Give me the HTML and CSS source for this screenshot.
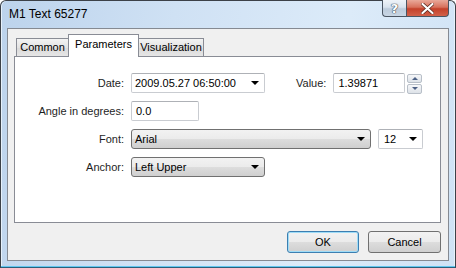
FILE: index.html
```html
<!DOCTYPE html>
<html lang="en">
<head>
    <meta charset="UTF-8">
    <title>M1 Text 65277</title>
    <link rel="stylesheet" href="styles.css">
</head>
<body>
    <div class="window">
        <div class="titlebar">
            <span class="title">M1 Text 65277</span>
            <div class="caption-buttons">
                <div class="cap-btn help">?</div>
                <div class="cap-btn close">
                    <svg width="13" height="11" viewBox="0 0 13 11">
                        <path d="M1.5 1 L11.5 10 M11.5 1 L1.5 10" stroke="#5a2a20" stroke-width="3.6" stroke-linecap="round"/>
                        <path d="M1.5 1 L11.5 10 M11.5 1 L1.5 10" stroke="#ffffff" stroke-width="2.2" stroke-linecap="round"/>
                    </svg>
                </div>
            </div>
        </div>

        <div class="client">
            <div class="tabs">
                <div class="tab tab-common">Common</div>
                <div class="tab tab-params active">Parameters</div>
                <div class="tab tab-vis">Visualization</div>
            </div>

            <div class="panel">
                <div class="row">
                    <label class="lbl">Date:</label>
                    <div class="combo edit w-date">
                        <span>2009.05.27 06:50:00</span>
                        <i class="arrow"></i>
                    </div>
                    <label class="lbl-value">Value:</label>
                    <div class="field w-value">1.39871</div>
                    <div class="spin">
                        <div class="spin-btn"><i class="up"></i></div>
                        <div class="spin-btn"><i class="down"></i></div>
                    </div>
                </div>
                <div class="row">
                    <label class="lbl">Angle in degrees:</label>
                    <div class="field w-angle">0.0</div>
                </div>
                <div class="row">
                    <label class="lbl">Font:</label>
                    <div class="combo list w-font">
                        <span>Arial</span>
                        <i class="arrow"></i>
                    </div>
                    <div class="combo edit w-size">
                        <span>12</span>
                        <i class="arrow"></i>
                    </div>
                </div>
                <div class="row">
                    <label class="lbl">Anchor:</label>
                    <div class="combo list w-anchor">
                        <span>Left Upper</span>
                        <i class="arrow"></i>
                    </div>
                </div>
            </div>

            <div class="actions">
                <button class="btn default">OK</button>
                <button class="btn">Cancel</button>
            </div>
        </div>
    </div>
</body>
</html>
```

FILE: styles.css
```css
body {
    margin: 0;
    padding: 0;
    background: #ffffff;
    font-family: 'Liberation Sans', Arial, sans-serif;
    font-size: 11px;
    color: #000;
}
.window {
    width: 456px;
    height: 268px;
    box-sizing: border-box;
    border: 1px solid #3c4148;
    border-bottom-color: #2a5f7c;
    border-radius: 6px 6px 0 0;
    background: linear-gradient(100deg, #bcd3ec 0%, #cfe1f4 35%, #dcebf9 70%, #cfe2f5 100%);
    box-shadow: inset 0 -1px 0 #62c6ef, inset 1px 0 0 #e6f1fb, inset -1px 0 0 #e6f1fb;
    display: flex;
    flex-direction: column;
}
.titlebar {
    height: 27px;
    flex: none;
    display: flex;
    justify-content: space-between;
    align-items: flex-start;
    padding: 0 6px 0 8px;
}
.title {
    font-size: 12px;
    line-height: 12px;
    margin-top: 7px;
    color: #000;
}
.caption-buttons {
    display: flex;
    margin-top: -1px;
}
.cap-btn {
    height: 17px;
    box-sizing: border-box;
    border: 1px solid #4a5562;
    border-top: none;
    display: flex;
    align-items: center;
    justify-content: center;
}
.help {
    width: 24px;
    border-radius: 0 0 0 4px;
    border-right: none;
    background: linear-gradient(#eef3f8 0%, #d9e3ee 45%, #bccbdb 55%, #c8d6e4 100%);
    font-family: 'DejaVu Sans', sans-serif;
    font-size: 13px;
    font-weight: bold;
    color: #ffffff;
    text-shadow: 0 0 1px #3b4653, 0 0 1px #3b4653, 0 0 1px #3b4653;
}
.close {
    width: 43px;
    border-radius: 0 0 4px 0;
    background: linear-gradient(#e9a99a 0%, #d8715c 45%, #c4412a 55%, #d2614a 100%);
}
.client {
    flex: 1;
    margin: 0 6px 6px 6px;
    border: 1px solid #858a92;
    background: #f0f0f0;
    display: flex;
    flex-direction: column;
}
.tabs {
    display: flex;
    align-items: flex-end;
    height: 22px;
    margin-top: 5px;
    padding-left: 8px;
    position: relative;
    z-index: 1;
}
.tab {
    box-sizing: border-box;
    height: 18px;
    border: 1px solid #898c95;
    border-bottom: none;
    background: linear-gradient(#f3f3f3, #e3e3e3 50%, #d9d9d9 51%, #e6e6e6);
    text-align: center;
    line-height: 17px;
    font-size: 11px;
    color: #000;
}
.tab-common {
    width: 52px;
    border-right: none;
}
.tab-params {
    width: 71px;
}
.tab-vis {
    width: 65px;
    border-left: none;
}
.tab.active {
    height: 23px;
    margin-bottom: -1px;
    background: #ffffff;
    line-height: 19px;
}
.panel {
    margin: 0 7px 0 6px;
    height: 167px;
    box-sizing: border-box;
    border: 1px solid #898c95;
    background: #ffffff;
    padding: 16px 0 0 0;
    display: flex;
    flex-direction: column;
    gap: 8px;
}
.row {
    display: flex;
    align-items: center;
    height: 20px;
}
.lbl {
    width: 109px;
    margin-right: 7px;
    text-align: right;
    color: #1e1e1e;
}
.lbl-value {
    margin-left: 31px;
    margin-right: 7px;
    color: #1e1e1e;
}
.field, .combo {
    box-sizing: border-box;
    height: 20px;
    display: flex;
    align-items: center;
}
.field {
    border: 1px solid #c9ccd1;
    border-top-color: #aeb1b6;
    border-radius: 2px;
    padding-left: 4px;
    background: #fff;
}
.combo {
    justify-content: space-between;
    padding: 0 5px 0 3px;
}
.combo.edit {
    border: 1px solid #c9ccd1;
    border-top-color: #aeb1b6;
    border-radius: 2px;
    background: #fff;
}
.combo.list {
    border: 1px solid #707070;
    border-radius: 3px;
    background: linear-gradient(#f2f2f2, #ebebeb 50%, #dddddd 51%, #cfcfcf);
}
.arrow {
    width: 0;
    height: 0;
    border-left: 4px solid transparent;
    border-right: 4px solid transparent;
    border-top: 4px solid #000;
}
.w-date { width: 134px; }
.w-value { width: 72px; }
.w-angle { width: 68px; }
.w-font { width: 240px; }
.w-size { width: 45px; margin-left: 7px; padding-left: 5px; }
.w-anchor { width: 134px; }
.spin {
    margin-left: 2px;
    width: 15px;
    height: 20px;
    display: flex;
    flex-direction: column;
    gap: 1px;
    margin-top: 1px;
}
.spin-btn {
    flex: 1;
    box-sizing: border-box;
    border: 1px solid #b8bfc8;
    border-radius: 2px;
    background: linear-gradient(#f6f7f9, #dde2e8);
    display: flex;
    align-items: center;
    justify-content: center;
}
.spin-btn i {
    width: 0;
    height: 0;
    border-left: 3px solid transparent;
    border-right: 3px solid transparent;
}
.spin-btn .up { border-bottom: 3px solid #4d6185; }
.spin-btn .down { border-top: 3px solid #4d6185; }
.actions {
    display: flex;
    justify-content: flex-end;
    gap: 9px;
    padding: 8px 7px 0 0;
}
.btn {
    box-sizing: border-box;
    height: 22px;
    width: 73px;
    border: 1px solid #707070;
    border-radius: 3px;
    background: linear-gradient(#f2f2f2, #ebebeb 50%, #dddddd 51%, #cfcfcf);
    font-family: 'Liberation Sans', Arial, sans-serif;
    font-size: 11px;
    color: #000;
    padding: 0;
}
.btn.default {
    width: 72px;
    border-color: #3c7fb1;
    box-shadow: inset 0 0 0 1px #9fdcf7;
}
```
